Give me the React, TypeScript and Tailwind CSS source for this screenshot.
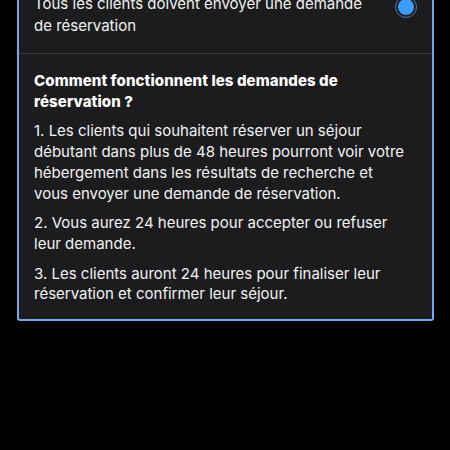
export default function App() {
  return (
    <div
      className="w-[450px] h-[450px] bg-black overflow-hidden text-white"
      style={{ fontFamily: "Inter, 'Noto Sans', sans-serif" }}
    >
      <div className="ml-[17px] w-[417px] mt-[-21px] rounded-b-[3px] border-2 border-[#78a6e6] bg-[#1c1c1e]">
        <div className="flex items-start justify-between pl-[15px] pr-[15px] pt-[12px] pb-[16px]">
          <div className="text-[15px] leading-[22px] text-[#f2f2f2]">
            Tous les clients doivent envoyer une demande
            <br />
            de réservation
          </div>
          <div className="mt-[3px] flex h-[22px] w-[22px] shrink-0 items-center justify-center rounded-full border border-[#4a78b0] bg-[#1c1c1e]">
            <div className="h-[16px] w-[16px] rounded-full bg-[#3d9dfc]" />
          </div>
        </div>
        <div className="h-px bg-[#3a3a3c]" />
        <div className="px-[15px] pt-[17px] pb-[14px] text-[15px] leading-[20.7px] text-[#f2f2f2]">
          <div className="font-extrabold text-white tracking-[0.1px]">
            Comment fonctionnent les demandes de
            <br />
            réservation ?
          </div>
          <p className="mt-[9px]">
            1. Les clients qui souhaitent réserver un séjour
            <br />
            débutant dans plus de 48 heures pourront voir votre
            <br />
            hébergement dans les résultats de recherche et
            <br />
            vous envoyer une demande de réservation.
          </p>
          <p className="mt-[9px]">
            2. Vous aurez 24 heures pour accepter ou refuser
            <br />
            leur demande.
          </p>
          <p className="mt-[9px]">
            3. Les clients auront 24 heures pour finaliser leur
            <br />
            réservation et confirmer leur séjour.
          </p>
        </div>
      </div>
    </div>
  );
}
